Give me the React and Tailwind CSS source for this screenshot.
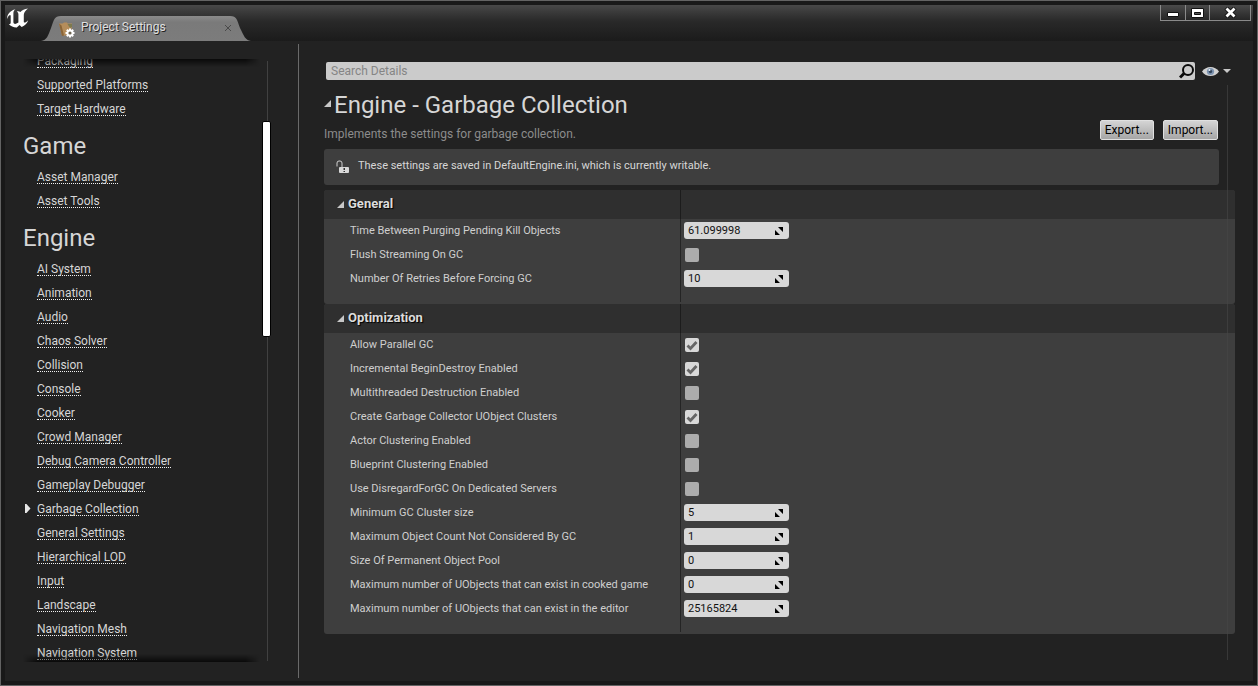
import React, { useState } from "react";

const navGroups = [
  { title: null, items: ["Packaging", "Supported Platforms", "Target Hardware"] },
  { title: "Game", items: ["Asset Manager", "Asset Tools"] },
  {
    title: "Engine",
    items: [
      "AI System",
      "Animation",
      "Audio",
      "Chaos Solver",
      "Collision",
      "Console",
      "Cooker",
      "Crowd Manager",
      "Debug Camera Controller",
      "Gameplay Debugger",
      "Garbage Collection",
      "General Settings",
      "Hierarchical LOD",
      "Input",
      "Landscape",
      "Navigation Mesh",
      "Navigation System",
    ],
  },
];

const categories = [
  {
    title: "General",
    settings: [
      { id: "purge-time", label: "Time Between Purging Pending Kill Objects", value: "61.099998" },
      { id: "flush-streaming", label: "Flush Streaming On GC", value: false },
      { id: "retries", label: "Number Of Retries Before Forcing GC", value: "10" },
    ],
  },
  {
    title: "Optimization",
    settings: [
      { id: "parallel", label: "Allow Parallel GC", value: true },
      { id: "incremental", label: "Incremental BeginDestroy Enabled", value: true },
      { id: "multithreaded", label: "Multithreaded Destruction Enabled", value: false },
      { id: "clusters", label: "Create Garbage Collector UObject Clusters", value: true },
      { id: "actor-cluster", label: "Actor Clustering Enabled", value: false },
      { id: "bp-cluster", label: "Blueprint Clustering Enabled", value: false },
      { id: "disregard", label: "Use DisregardForGC On Dedicated Servers", value: false },
      { id: "min-cluster", label: "Minimum GC Cluster size", value: "5" },
      { id: "max-not-considered", label: "Maximum Object Count Not Considered By GC", value: "1" },
      { id: "pool-size", label: "Size Of Permanent Object Pool", value: "0" },
      { id: "max-cooked", label: "Maximum number of UObjects that can exist in cooked game", value: "0" },
      { id: "max-editor", label: "Maximum number of UObjects that can exist in the editor", value: "25165824" },
    ],
  },
];

function UnrealLogo() {
  return (
    <svg viewBox="0 0 23 20" className="w-[23px] h-5" fill="#fff">
      <path d="M1 11C1 6.500 4 2.500 9.500 1.200C8 2.200 7.400 3.500 7.400 5V14.200C7.600 15.600 8.600 16.200 10 15.800L12.400 14.500V6.500C12.400 5 11.800 4 10.800 3.400C12.200 3 13.400 3.200 14.400 4C16 2.200 18.500 1 22 .400C19.500 2.200 18 4.200 17.800 6.800V14C18.200 15.200 20 14.600 22.200 12.200C21.200 15.200 19 17.600 15.700 19L13.500 16.900L10.800 19.400C7.600 19.500 4.800 18.300 2.800 16C4 16.300 4.700 15.700 4.700 14.500V8C4.700 6.600 3.800 6.600 2.800 7.800C2 8.800 1.500 10 1 11Z" />
    </svg>
  );
}

function SettingsIcon() {
  return (
    <svg viewBox="0 0 16 16" className="w-4 h-4">
      <path d="M0 1.500 3.500 1.500 5 .500H8l.6 1H13v3L12 9 9 13.500H3z" fill="#b58d5b" />
      <path d="M0 1.500 2.500 3.500 5 13.500 3 14z" fill="#8a6538" />
      <path d="M8.500 2H13v2.500L11.500 6 10 4.500z" fill="#7d7a4e" />
      <g fill="#fff">
        <circle cx="11" cy="11" r="3.500" />
        <path d="M10 6.500h2v9h-2z" />
        <path d="M10 6.500h2v9h-2z" transform="rotate(45 11 11)" />
        <path d="M10 6.500h2v9h-2z" transform="rotate(90 11 11)" />
        <path d="M10 6.500h2v9h-2z" transform="rotate(135 11 11)" />
      </g>
      <circle cx="11" cy="11" r="1.600" fill="#6b6250" />
    </svg>
  );
}

function Expander() {
  return (
    <svg viewBox="0 0 7 7" className="w-[7px] h-[7px] shrink-0" fill="#c8c8c8">
      <path d="M7 0v7H0z" />
    </svg>
  );
}

function WindowControls() {
  const button =
    "h-4 flex items-center justify-center border border-t-0 border-[#8a8a8a] bg-linear-to-b from-[#4a4a4a] to-[#262626]";
  return (
    <div className="flex self-start">
      <button aria-label="Minimize" className={`${button} w-[26px]`}>
        <svg viewBox="0 0 12 5" className="w-3 h-[5px] mt-1">
          <path d="M.5.5h11v4H.5z" fill="#fff" stroke="#111" />
        </svg>
      </button>
      <button aria-label="Maximize" className={`${button} w-6 border-l-0`}>
        <svg viewBox="0 0 13 10" className="w-[13px] h-[10px]">
          <path d="M.5.5h12v9H.5z" fill="#fff" stroke="#111" />
          <path d="M3.500 4.500h6v2h-6z" fill="#555" stroke="#111" />
        </svg>
      </button>
      <button aria-label="Close" className={`${button} w-[41px] border-l-0`}>
        <svg viewBox="0 0 13 11" className="w-[13px] h-[11px]">
          <path d="m2 1 9 9m0-9-9 9" stroke="#111" strokeWidth="4.500" />
          <path d="m2.500 1.500 8 8m0-8-8 8" stroke="#fff" strokeWidth="2.800" />
        </svg>
      </button>
    </div>
  );
}

function TitleBar() {
  return (
    <header className="h-9 flex items-start bg-linear-to-b from-[#484848] via-[#292929] via-45% to-[#1b1b1b]">
      <div className="pt-[3px] pl-px w-9">
        <UnrealLogo />
      </div>
      <div className="relative w-[210px] h-[25px] mt-[11px]">
        <svg viewBox="0 0 210 25" className="absolute inset-0 w-full h-full" preserveAspectRatio="none">
          <defs>
            <linearGradient id="tab" x1="0" y1="0" x2="0" y2="1">
              <stop offset="0" stopColor="#8b8b8b" />
              <stop offset="0.250" stopColor="#7a7a7a" />
              <stop offset="1" stopColor="#7c7c7c" />
            </linearGradient>
          </defs>
          <path d="M0 25C6 24 7 20 10 12C13 4 13 0 20 0H189C196 0 196 4 199 12C203 20 204 24 210 25Z" fill="url(#tab)" />
        </svg>
        <div className="relative flex items-center h-[23px] pl-[18px] pr-5">
          <span className="pt-1">
            <SettingsIcon />
          </span>
          <span className="ml-[6px] flex-1 pb-px text-[12px] text-[#e0e0e0] [text-shadow:1px_1px_0_#222]">
            Project Settings
          </span>
          <button aria-label="Close tab">
            <svg viewBox="0 0 6 6" className="w-[6px] h-[6px] mt-px" stroke="#4a4a4a">
              <path d="m0 0 6 6M6 0 0 6" />
            </svg>
          </button>
        </div>
      </div>
      <div className="flex-1" />
      <WindowControls />
      <div className="w-[2px]" />
    </header>
  );
}

function Sidebar({ active, onSelect }) {
  return (
    <aside className="w-[293px] shrink-0 flex pt-[18px] pb-[19px] pl-[18px]">
      <nav className="relative w-[237px] overflow-hidden">
        <div className="-mt-[10px]">
          {navGroups.map((group, i) => (
            <section key={i}>
              {group.title && (
                <h2 className="h-11 pt-[9px] text-[24px] leading-8 text-[#d6d6d6]">{group.title}</h2>
              )}
              <ul>
                {group.items.map((item) => (
                  <li key={item} className="h-6 flex items-start pt-[7px]">
                    <span className="w-[14px] shrink-0">
                      {item === active && (
                        <svg viewBox="0 0 6 9" className="w-[6px] h-[9px] ml-[2px]" fill="#e6e6e6">
                          <path d="M0 0h1.500L5.500 4.500 1.500 9H0z" />
                        </svg>
                      )}
                    </span>
                    <a
                      href="#"
                      onClick={(e) => {
                        e.preventDefault();
                        onSelect(item);
                      }}
                      className="text-[12px] leading-[11px] text-[#d6d6d6] border-b border-dotted border-[#f0f0f0] whitespace-nowrap"
                    >
                      {item}
                    </a>
                  </li>
                ))}
              </ul>
            </section>
          ))}
        </div>
        <div className="absolute top-0 inset-x-0 h-2 bg-linear-to-b from-black/70 to-transparent [mask-image:linear-gradient(90deg,transparent,#000_6%,#000_94%,transparent)]" />
        <div className="absolute bottom-0 inset-x-0 h-2 bg-linear-to-t from-black/70 to-transparent [mask-image:linear-gradient(90deg,transparent,#000_6%,#000_94%,transparent)]" />
      </nav>
      <div className="relative w-[9px] ml-[2px] mt-[2px] mb-px flex justify-end pr-[3px]">
        <div className="w-px bg-[#414141]" />
        <div className="absolute top-[60px] inset-x-0 h-[36%] bg-white border border-black rounded-xs" />
      </div>
    </aside>
  );
}

function NumberField({ id, value, onChange }) {
  return (
    <div className="relative w-[105px]">
      <input
        id={id}
        type="text"
        inputMode="decimal"
        value={value}
        onChange={(e) => onChange(e.target.value)}
        className="block w-full h-[17px] pl-1 pr-5 rounded-[3px] bg-[#d8d8d8] text-[11px] leading-[17px] text-[#111] outline-none"
      />
      <svg viewBox="0 0 8 8" className="absolute right-[6px] top-[5px] w-2 h-2 pointer-events-none" fill="#000">
        <path d="M3 0h5v5zM0 3v5h5z" />
      </svg>
    </div>
  );
}

function CheckBox({ id, checked, onChange }) {
  return (
    <div className="relative ml-px w-[14px] h-[14px]">
      <input
        id={id}
        type="checkbox"
        checked={checked}
        onChange={(e) => onChange(e.target.checked)}
        className="block appearance-none w-[14px] h-[14px] rounded-xs bg-[#acacac] checked:bg-[#d8d8d8]"
      />
      {checked && (
        <svg viewBox="0 0 14 14" className="absolute inset-0 pointer-events-none" fill="none">
          <path d="m2.500 7.500 3 3L11.500 4" stroke="#666" strokeWidth="2.800" />
        </svg>
      )}
    </div>
  );
}

function Category({ title, settings, values, onChange }) {
  return (
    <section className="bg-[#3e3e3e] rounded-[3px] overflow-hidden">
      <div className="h-[29px] flex bg-[#2f2f2f]">
        <button className="w-[356px] shrink-0 flex items-center pl-[13px] pb-[2px] text-[13px] font-bold text-[#dcdcdc] [text-shadow:1px_1px_1px_#000]">
          <span className="pt-[2px]">
            <Expander />
          </span>
          <span className="ml-1">{title}</span>
        </button>
        <div className="border-l border-[#1c1c1c]" />
      </div>
      <div className="relative pb-[13px]">
        {settings.map((s) => (
          <div key={s.id} className="h-6 flex items-center pb-px">
            <label
              htmlFor={s.id}
              className="w-[360px] shrink-0 pl-[26px] text-[11px] leading-4 text-[#cfcfcf] whitespace-nowrap"
            >
              {s.label}
            </label>
            {typeof s.value === "boolean" ? (
              <CheckBox id={s.id} checked={values[s.id]} onChange={(v) => onChange(s.id, v)} />
            ) : (
              <NumberField id={s.id} value={values[s.id]} onChange={(v) => onChange(s.id, v)} />
            )}
          </div>
        ))}
        <div className="absolute left-[356px] top-0 bottom-[2px] w-px bg-[#242424]" />
      </div>
    </section>
  );
}

function SearchRow() {
  return (
    <div className="flex items-center pl-[2px] pr-1">
      <div className="relative flex-1">
        <input
          type="text"
          aria-label="Search Details"
          placeholder="Search Details"
          className="block w-full h-[18px] pl-[5px] rounded-xs bg-[#cbcbcb] text-[12px] text-[#222] placeholder:text-[#858585] outline-none"
        />
        <svg viewBox="0 0 16 15" className="absolute right-0 top-[2px] w-4 h-[15px]" fill="none" stroke="#0a0a0a">
          <circle cx="9" cy="6" r="5" strokeWidth="2" />
          <path d="M5 9.500 1 13.500" strokeWidth="3" />
        </svg>
      </div>
      <button aria-label="View options" className="flex items-center gap-1 ml-[7px]">
        <svg viewBox="0 0 17 11" className="w-[17px] h-[11px]">
          <path d="M0 5.500C4 -.500 13 -.500 17 5.500 13 11.500 4 11.500 0 5.500z" fill="#d2d2d2" />
          <circle cx="8.500" cy="5.500" r="3.600" fill="#7c93b0" />
          <circle cx="8.500" cy="5.500" r="1.700" fill="#33455c" />
          <circle cx="7.500" cy="4" r="1" fill="#e8eef5" />
        </svg>
        <svg viewBox="0 0 8 4" className="w-2 h-1" fill="#c8c8c8">
          <path d="M0 0h8L4 4z" />
        </svg>
      </button>
    </div>
  );
}

export default function App() {
  const [active, setActive] = useState("Garbage Collection");
  const [values, setValues] = useState(() =>
    Object.fromEntries(categories.flatMap((c) => c.settings.map((s) => [s.id, s.value])))
  );

  function handleChange(id, value) {
    setValues((prev) => ({ ...prev, [id]: value }));
  }

  const smallButton =
    "h-5 px-1 text-[12px] leading-[18px] text-black rounded-xs border border-[#e0e0e0] bg-linear-to-b from-[#d4d4d4] to-[#a6a6a6]";

  return (
    <div className="h-screen flex flex-col p-1 bg-[#191919] border border-[#636363] font-['Roboto',sans-serif]">
      <TitleBar />
      <div className="flex-1 min-h-0 flex bg-[#222]">
        <Sidebar active={active} onSelect={setActive} />
        <div className="w-px my-[3px] bg-[#6a6a6a]" />
        <main className="relative flex-1 min-w-0 pt-[21px] pl-[25px] pr-[18px]">
          <SearchRow />
          <div className="flex items-end pt-[10px] pr-4">
            <div className="flex-1">
              <h1 className="flex items-center h-[30px] text-[24px] leading-[30px] text-[#d6d6d6]">
                <span className="pb-1 leading-none">
                  <Expander />
                </span>
                <span className="ml-[3px]">Engine - Garbage Collection</span>
              </h1>
              <p className="h-[29px] pt-[5px] text-[12px] leading-[18px] text-[#8c8c8c]">
                Implements the settings for garbage collection.
              </p>
            </div>
            <div className="flex gap-[9px] pb-[9px] pr-px">
              <button className={smallButton}>Export...</button>
              <button className={smallButton}>Import...</button>
            </div>
          </div>
          <div className="h-9 mr-4 mb-[5px] flex items-center pl-3 pb-px rounded-[3px] bg-[#3e3e3e] text-[11px] text-[#d6d6d6]">
            <svg viewBox="0 0 14 14" className="w-[14px] h-[14px] mr-2">
              <path d="M1 6.500V3Q1 1 3 1h1Q6 1 6 3v4" fill="none" stroke="#d0d0d0" />
              <rect x="3" y="7" width="10" height="6" rx="1" fill="#d8d8d8" />
              <path d="M7.500 8h1.500v2H7.500zM7.500 11h1.500v1H7.500z" fill="#333" />
            </svg>
            <span>These settings are saved in DefaultEngine.ini, which is currently writable.</span>
          </div>
          {categories.map((c) => (
            <Category key={c.title} {...c} values={values} onChange={handleChange} />
          ))}
          <div className="absolute top-11 bottom-[21px] right-[25px] w-px bg-[#474747]/60" />
        </main>
      </div>
    </div>
  );
}
